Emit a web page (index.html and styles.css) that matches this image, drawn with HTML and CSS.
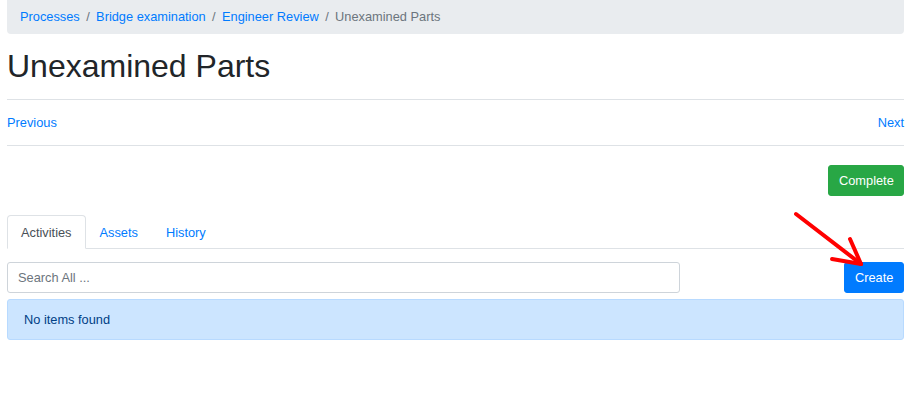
FILE: index.html
```html
<!DOCTYPE html>
<html>
<head>
<meta charset="utf-8">
<link rel="stylesheet" href="styles.css">
</head>
<body>
<div class="container">
  <nav class="breadcrumb">
    <a href="#">Processes</a><span class="sep">/</span>
    <a href="#">Bridge examination</a><span class="sep">/</span>
    <a href="#">Engineer Review</a><span class="sep">/</span>
    <span class="active">Unexamined Parts</span>
  </nav>
  <h1 class="title">Unexamined Parts</h1>
  <div class="pager">
    <a href="#">Previous</a>
    <a href="#">Next</a>
  </div>
  <div class="actions">
    <button class="btn btn-success">Complete</button>
  </div>
  <ul class="tabs">
    <li class="tab active">Activities</li>
    <li class="tab">Assets</li>
    <li class="tab">History</li>
  </ul>
  <div class="search-row">
    <input class="search" type="text" placeholder="Search All ...">
    <button class="btn btn-primary">Create</button>
  </div>
  <div class="alert">No items found</div>
</div>
<svg class="arrow" width="914" height="410" viewBox="0 0 914 410">
  <g stroke="#ff0000" stroke-width="4" stroke-linecap="round" fill="none">
    <line x1="796" y1="214" x2="861" y2="264"/>
    <line x1="861" y1="264" x2="850" y2="239"/>
    <line x1="861" y1="264" x2="832" y2="259"/>
  </g>
</svg>
</body>
</html>
```
FILE: styles.css
```css
* { box-sizing: border-box; }
body {
  margin: 0;
  font-family: "Liberation Sans", Arial, sans-serif;
  font-size: 12.8px;
  line-height: 19.5px;
  color: #212529;
  background: #fff;
}
a { color: #007bff; text-decoration: none; }
.container {
  width: 911px;
  padding: 0 7px;
}
.breadcrumb {
  display: flex;
  align-items: center;
  background: #e9ecef;
  border-radius: 0 0 4px 4px;
  padding: 7px 13px;
  height: 34px;
  margin-bottom: 13px;
}
.breadcrumb .sep {
  color: #6c757d;
  padding: 0 6.4px;
}
.breadcrumb .active { color: #6c757d; }
.title {
  font-size: 32px;
  font-weight: 400;
  line-height: 1.2;
  margin: 0 0 14px 0;
  height: 38px;
}
.pager {
  display: flex;
  justify-content: space-between;
  border-top: 1px solid #dee2e6;
  border-bottom: 1px solid #dee2e6;
  padding: 12.5px 0;
}
.actions {
  display: flex;
  justify-content: flex-end;
  margin-top: 19px;
  margin-bottom: 19px;
}
.btn {
  font-family: inherit;
  font-size: 12.8px;
  line-height: 19.5px;
  padding: 5.5px 10px;
  border: 1px solid transparent;
  border-radius: 3px;
  color: #fff;
  height: 31px;
}
.btn-success { background: #28a745; border-color: #28a745; width: 76px; }
.btn-primary { background: #007bff; border-color: #007bff; width: 60px; }
.tabs {
  display: flex;
  list-style: none;
  margin: 0 0 13px 0;
  padding: 0;
  border-bottom: 1px solid #dee2e6;
}
.tab {
  color: #007bff;
  padding: 7px 13px 5px;
  border: 1px solid transparent;
  border-top-left-radius: 4px;
  border-top-right-radius: 4px;
  margin-bottom: -1px;
  height: 34px;
}
.tab.active {
  color: #495057;
  background: #fff;
  border-color: #dee2e6 #dee2e6 #fff;
}
.search-row {
  display: flex;
  justify-content: space-between;
  align-items: center;
  margin-bottom: 6px;
}
.search {
  width: 673px;
  height: 31px;
  font-family: inherit;
  font-size: 12.8px;
  padding: 5px 10px;
  border: 1px solid #ced4da;
  border-radius: 3px;
  color: #495057;
}
.search::placeholder { color: #6c757d; }
.alert {
  background: #cce5ff;
  border: 1px solid #b8daff;
  color: #004085;
  border-radius: 3px;
  padding: 10px 16px 9px;
  height: 41px;
}
.arrow {
  position: absolute;
  left: 0;
  top: 0;
  pointer-events: none;
}
```
